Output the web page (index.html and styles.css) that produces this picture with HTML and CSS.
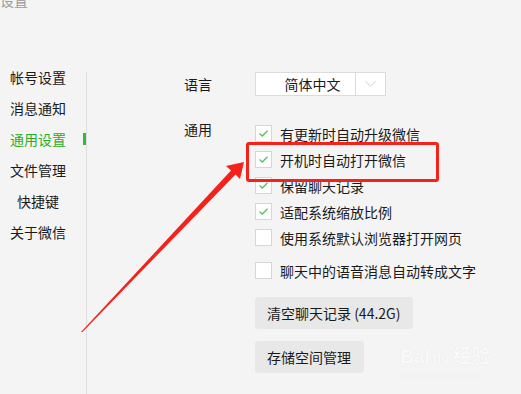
FILE: index.html
```html
<!DOCTYPE html>
<html lang="zh-CN">
<head>
    <meta charset="UTF-8">
    <meta name="viewport" content="width=device-width, initial-scale=1.0">
    <title>设置</title>
    <link rel="stylesheet" href="styles.css">
</head>
<body>
    <div class="title">设置</div>

    <div class="main">
        <aside class="sidebar">
            <ul class="nav">
                <li>帐号设置</li>
                <li>消息通知</li>
                <li class="active">通用设置</li>
                <li>文件管理</li>
                <li>快捷键</li>
                <li>关于微信</li>
            </ul>
        </aside>

        <section class="content">
            <div class="row lang-row">
                <span class="label">语言</span>
                <div class="select">
                    <span class="select-text">简体中文</span>
                    <span class="select-arrow">
                        <svg width="11" height="6" viewBox="0 0 11 6"><polyline points="0.5,0.5 5.5,5 10.5,0.5" fill="none" stroke="#cfcfcf" stroke-width="1"/></svg>
                    </span>
                </div>
            </div>

            <div class="row general-row">
                <span class="label">通用</span>
                <div class="options">
                    <label class="option"><span class="box checked"></span>有更新时自动升级微信</label>
                    <label class="option"><span class="box checked"></span>开机时自动打开微信</label>
                    <label class="option"><span class="box checked"></span>保留聊天记录</label>
                    <label class="option"><span class="box checked"></span>适配系统缩放比例</label>
                    <label class="option gap"><span class="box"></span>使用系统默认浏览器打开网页</label>
                    <label class="option"><span class="box"></span>聊天中的语音消息自动转成文字</label>

                    <div class="buttons">
                        <button class="btn">清空聊天记录 (44.2G)</button>
                        <button class="btn">存储空间管理</button>
                    </div>
                </div>
            </div>
        </section>
    </div>

    <!-- annotation -->
    <div class="mark-box"></div>
    <svg class="mark-arrow" width="521" height="394" viewBox="0 0 521 394">
        <polygon points="244,162 226,166 231,170.5 81,332 82.5,332 235.5,174.5 240,179" fill="#f5221b"/>
    </svg>

    <div class="watermark">
        <div class="wm-logo">Bai<span class="paw">du</span>经验</div>
        <div class="wm-url">jingyan.baidu.com</div>
    </div>
</body>
</html>
```

FILE: styles.css
```css
body {
    margin: 0;
    padding: 0;
    width: 521px;
    height: 394px;
    overflow: hidden;
    background-color: #f4f4f4;
    color: #1a1a1a;
    font-family: "Microsoft YaHei", "Noto Sans CJK SC", "Noto Sans", sans-serif;
    font-size: 14px;
    position: relative;
}

.title {
    color: #9b9b9b;
    line-height: 20px;
    margin-top: -10px;
    height: 20px;
}

.main {
    display: flex;
    margin-top: 62px;
    height: 322px;
}

.sidebar {
    width: 87px;
    box-sizing: border-box;
    border-right: 1px solid #dedede;
}

.nav {
    list-style: none;
    margin: -5px 0 0;
    padding: 0 0 0 10px;
}

.nav li {
    width: 56px;
    text-align: center;
    line-height: 20px;
    margin-bottom: 11px;
    position: relative;
}

.nav li.active {
    color: #2aae2a;
}

.nav li.active::after {
    content: "";
    position: absolute;
    right: -20px;
    top: 4px;
    width: 3px;
    height: 12px;
    background-color: #2bbd3a;
}

.content {
    padding-left: 97px;
}

.row {
    display: flex;
}

.label {
    width: 71px;
    line-height: 20px;
}

.lang-row {
    align-items: center;
}

.select {
    display: flex;
    width: 131px;
    height: 24px;
    box-sizing: border-box;
    border: 1px solid #dcdcdc;
    background-color: #fff;
}

.select-text {
    width: 100px;
    line-height: 22px;
    text-align: center;
    padding-left: 14px;
    box-sizing: border-box;
    border-right: 1px solid #dcdcdc;
}

.select-arrow {
    flex: 1;
    display: flex;
    align-items: center;
    justify-content: center;
}

.general-row {
    margin-top: 23px;
}

.options {
    padding-top: 6px;
    display: flex;
    flex-direction: column;
}

.option {
    display: flex;
    align-items: center;
    height: 17px;
    margin-bottom: 9px;
    white-space: nowrap;
}

.option.gap {
    margin-bottom: 16px;
}

.box {
    width: 17px;
    height: 17px;
    box-sizing: border-box;
    border: 1px solid #d6d6d6;
    background-color: #fff;
    margin-right: 8px;
    flex-shrink: 0;
}

.box.checked {
    background: #fff url("data:image/svg+xml;utf8,<svg xmlns='http://www.w3.org/2000/svg' width='15' height='15' viewBox='0 0 15 15'><polyline points='3.5,7.5 6.3,10 11.5,4.8' fill='none' stroke='%2358c15e' stroke-width='1.3'/></svg>") no-repeat center;
}

.buttons {
    display: flex;
    flex-direction: column;
    align-items: flex-start;
    gap: 12px;
    margin-top: 9px;
}

.btn {
    font-family: inherit;
    font-size: 14px;
    color: #1a1a1a;
    height: 32px;
    padding: 0 13px 0 12px;
    border: none;
    border-radius: 3px;
    background-color: #e8e8e8;
}

.mark-box {
    position: absolute;
    left: 246px;
    top: 142px;
    width: 193px;
    height: 40px;
    box-sizing: border-box;
    border: 3px solid #f5221b;
    border-radius: 3px;
}

.mark-arrow {
    position: absolute;
    left: 0;
    top: 0;
}

.watermark {
    position: absolute;
    left: 400px;
    top: 345px;
    color: #f9f9f9;
    text-shadow: 0 0 1px #e2e2e2;
    font-family: "Liberation Sans", "Noto Sans CJK SC", sans-serif;
}

.wm-logo {
    font-size: 19px;
    font-weight: bold;
    line-height: 24px;
}

.paw {
    font-size: 14px;
    padding: 0 3px;
}

.wm-url {
    font-size: 10px;
    line-height: 12px;
}
```
